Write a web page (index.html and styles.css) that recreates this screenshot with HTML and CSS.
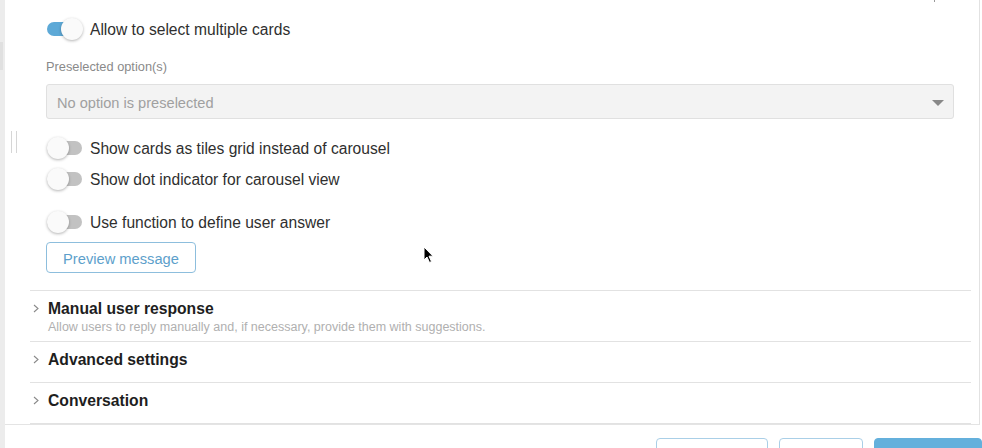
FILE: index.html
```html
<!DOCTYPE html>
<html>
<head>
<meta charset="utf-8">
<link rel="stylesheet" href="styles.css">
</head>
<body>
<div class="app">
  <div class="side"><div class="side-mark"></div></div>
  <div class="dialog">
    <div class="scroll">
      <div class="grip"></div>
      <div class="top-mark"></div>
      <div class="form">
        <div class="toggle-row">
          <span class="toggle on"><span class="knob"></span></span>
          <span class="toggle-label">Allow to select multiple cards</span>
        </div>
        <div class="field-label">Preselected option(s)</div>
        <div class="select">
          <span class="select-text">No option is preselected</span>
          <span class="caret"></span>
        </div>
        <div class="toggle-row r2">
          <span class="toggle"><span class="knob"></span></span>
          <span class="toggle-label">Show cards as tiles grid instead of carousel</span>
        </div>
        <div class="toggle-row r3">
          <span class="toggle"><span class="knob"></span></span>
          <span class="toggle-label">Show dot indicator for carousel view</span>
        </div>
        <div class="toggle-row r4">
          <span class="toggle"><span class="knob"></span></span>
          <span class="toggle-label">Use function to define user answer</span>
        </div>
        <button class="btn-outline preview">Preview message</button>
      </div>
      <div class="sections">
        <div class="section has-sub">
          <div class="section-head">
            <span class="chev"><svg width="6" height="9" viewBox="0 0 6 9"><polyline points="1,1 5,4.5 1,8" fill="none" stroke="#8a8a8a" stroke-width="1.1"/></svg></span>
            <span class="section-title">Manual user response</span>
          </div>
          <div class="section-sub">Allow users to reply manually and, if necessary, provide them with suggestions.</div>
        </div>
        <div class="section">
          <div class="section-head">
            <span class="chev"><svg width="6" height="9" viewBox="0 0 6 9"><polyline points="1,1 5,4.5 1,8" fill="none" stroke="#8a8a8a" stroke-width="1.1"/></svg></span>
            <span class="section-title">Advanced settings</span>
          </div>
        </div>
        <div class="section">
          <div class="section-head">
            <span class="chev"><svg width="6" height="9" viewBox="0 0 6 9"><polyline points="1,1 5,4.5 1,8" fill="none" stroke="#8a8a8a" stroke-width="1.1"/></svg></span>
            <span class="section-title">Conversation</span>
          </div>
        </div>
      </div>
      <div class="cursor">
        <svg width="12" height="18" viewBox="0 0 12 18"><path d="M1 1 L1 14 L4 11 L6.5 16.5 L8.5 15.5 L6 10.2 L10 10.2 Z" fill="#000" stroke="#fff" stroke-width="1"/></svg>
      </div>
    </div>
    <div class="footer">
      <button class="fbtn w1"></button>
      <button class="fbtn w2"></button>
      <button class="fbtn primary"></button>
    </div>
  </div>
</div>
</body>
</html>
```
FILE: styles.css
```css
* { box-sizing: border-box; }
html, body { margin: 0; padding: 0; }
body {
  width: 982px;
  height: 448px;
  overflow: hidden;
  background: #ffffff;
  font-family: "Liberation Sans", Arial, sans-serif;
  color: #333;
}
.app {
  display: flex;
  height: 448px;
}
.side {
  width: 5px;
  background: #ececec;
  flex: none;
  padding-top: 42px;
}
.side-mark {
  width: 3px;
  height: 28px;
  background: #e0e0e0;
}
.dialog {
  flex: 1;
  display: flex;
  flex-direction: column;
  min-width: 0;
}
.scroll {
  position: relative;
  height: 425px;
  border-right: 1px solid #e2e2e2;
  border-bottom: 1px solid #e4e4e4;
  margin-right: 2px;
  padding: 0 8px 0 25px;
  overflow: hidden;
}
.grip {
  position: absolute;
  left: 6px;
  top: 131px;
  width: 6px;
  height: 22px;
  border-left: 1px solid #d6d6d6;
  border-right: 1px solid #d6d6d6;
}
.top-mark {
  position: absolute;
  right: 44px;
  top: 0;
  width: 1px;
  height: 2px;
  background: #999;
}
.form {
  padding: 18px 17px 17px 16px;
  display: flex;
  flex-direction: column;
  align-items: flex-start;
}
.toggle-row {
  display: flex;
  align-items: center;
  height: 22px;
}
.toggle-row.r2 { margin-top: 18px; }
.toggle-row.r3 { margin-top: 9px; }
.toggle-row.r4 { margin-top: 21px; }
.toggle {
  position: relative;
  width: 35px;
  height: 14px;
  border-radius: 7px;
  background: #c2c2c2;
  margin-right: 8px;
  margin-left: 1px;
  flex: none;
}
.toggle.on { background: #5da9d7; }
.knob {
  position: absolute;
  top: -4px;
  left: 0;
  width: 22px;
  height: 22px;
  border-radius: 50%;
  background: #fafafa;
  box-shadow: 0 1px 3px rgba(0,0,0,0.3);
}
.toggle.on .knob { left: 14px; }
.toggle-label {
  font-size: 15.6px;
  color: #2f2f2f;
  line-height: 18px;
  padding-top: 2px;
}
.field-label {
  margin-top: 18px;
  font-size: 12.8px;
  line-height: 17px;
  color: #8a8a8a;
}
.select {
  margin-top: 9px;
  align-self: stretch;
  height: 35px;
  border: 1px solid #e0e0e0;
  border-radius: 3px;
  background: #f3f3f3;
  display: flex;
  align-items: center;
  justify-content: space-between;
  padding: 2px 9px 0 10px;
}
.select-text {
  font-size: 14.6px;
  color: #a0a0a0;
}
.caret {
  width: 0;
  height: 0;
  border-left: 6px solid transparent;
  border-right: 6px solid transparent;
  border-top: 6px solid #888;
}
.btn-outline {
  font-family: inherit;
  background: #fff;
  cursor: pointer;
}
.preview {
  margin-top: 9px;
  width: 150px;
  height: 31px;
  border: 1px solid #8dbedd;
  border-radius: 4px;
  color: #5d9fcb;
  font-size: 14.7px;
  padding: 2px 0 0;
}
.sections {
  display: flex;
  flex-direction: column;
}
.section {
  border-top: 1px solid #e2e2e2;
  padding: 8px 0 12px;
}
.section.has-sub { padding-bottom: 6px; }
.section:last-child { border-bottom: 1px solid #e2e2e2; }
.section-head {
  display: flex;
  align-items: center;
  height: 20px;
}
.chev {
  width: 18px;
  flex: none;
  display: flex;
  padding-left: 3px;
  margin-top: -2px;
}
.section-title {
  font-size: 15.7px;
  font-weight: bold;
  color: #1e1e1e;
}
.section-sub {
  margin-top: 0;
  padding-left: 18px;
  font-size: 12.5px;
  line-height: 16px;
  color: #b0b0b0;
}
.cursor {
  position: absolute;
  left: 418px;
  top: 246px;
  width: 12px;
  height: 18px;
}
.cursor svg { display: block; }
.footer {
  flex: 1;
  display: flex;
  justify-content: flex-end;
  gap: 11px;
  padding-top: 13px;
  overflow: hidden;
}
.fbtn {
  height: 32px;
  border-radius: 4px;
  border: 1px solid #aacfe7;
  background: #fff;
  padding: 0;
  flex: none;
}
.fbtn.w1 { width: 112px; }
.fbtn.w2 { width: 84px; }
.fbtn.primary {
  width: 108px;
  background: #64b0dc;
  border-color: #64b0dc;
}
```
